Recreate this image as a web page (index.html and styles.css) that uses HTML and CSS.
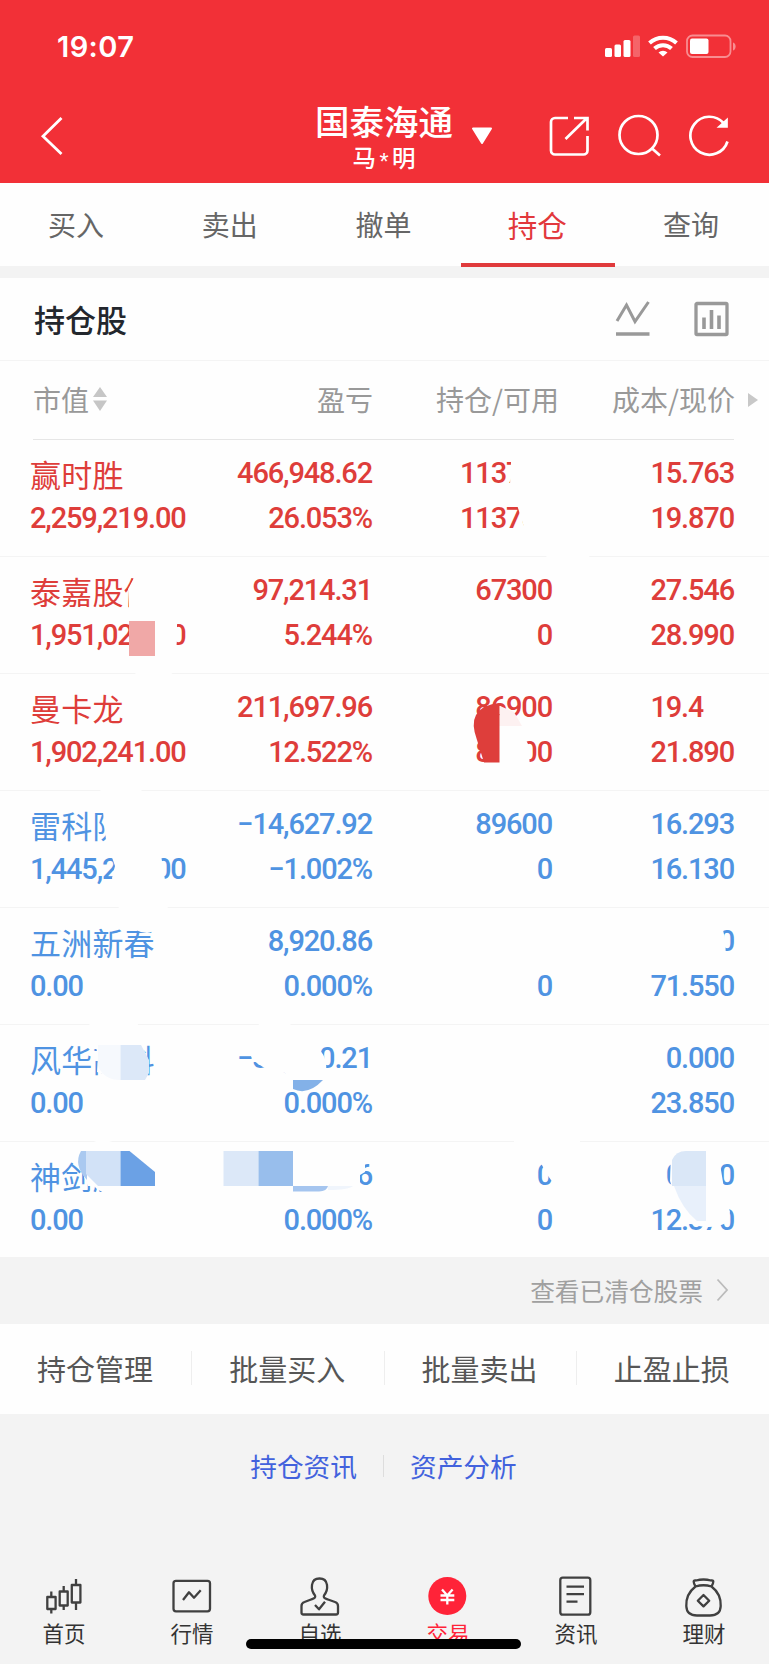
FILE: index.html
```html
<!DOCTYPE html>
<html lang="zh-CN">
<head>
<meta charset="utf-8">
<title>持仓</title>
<link rel="stylesheet" href="styles.css">
</head>
<body>
<div class="app">
  <header class="header">
    <div class="status">
      <span class="time">19:07</span>
      <svg class="status-icons" width="134" height="26" viewBox="0 0 134 26">
        <g fill="#fff">
          <rect x="1" y="14" width="7" height="9" rx="1.5"/><rect x="10.500" y="10.500" width="6.500" height="12.500" rx="1.500"/><rect x="19.500" y="6" width="7" height="17" rx="1.500"/><rect x="29" y="1.500" width="7" height="21.500" rx="1.500" opacity=".25"/>
          <path d="M59 22.500l-4.500-4a6.500 6 0 0 1 9 0z"/>
          <rect x="86" y="4.500" width="18.500" height="15.500" rx="2"/>
          <path d="M129 8.500c3.500 1 3.500 7 0 8z" opacity=".45"/>
        </g>
        <g fill="none" stroke="#fff" stroke-width="4"><path d="M45.500 9a20 20 0 0 1 27 0"/><path d="M50.500 14.500a12.500 12.500 0 0 1 17 0"/></g>
        <rect x="83" y="1.500" width="43.500" height="21.500" rx="5.500" fill="none" stroke="#fff" stroke-width="1.800" opacity=".45"/>
      </svg>
    </div>
    <div class="titlebar">
      <svg class="back" width="24" height="40" viewBox="0 0 24 40"><path d="M21.500 2L3 20.200L21.500 38" fill="none" stroke="#fff" stroke-width="2.800"/></svg>
      <div class="account"><div class="broker">国泰海通</div><div class="owner">马<i>*</i>明</div></div>
      <svg class="caret" width="22" height="18" viewBox="0 0 22 18"><path d="M2 1.500h18L11 16z" fill="#fff" stroke="#fff" stroke-width="2" stroke-linejoin="round"/></svg>
      <svg class="tools" width="184" height="44" viewBox="0 0 184 44">
        <g fill="none" stroke="#fff" stroke-width="2.700">
          <path d="M20 4H7a4 4 0 0 0-4 4v28.500a4 4 0 0 0 4 4h28.500a4 4 0 0 0 4-4V22M17.500 25L38.500 4.500M26 4h13.500v12.500"/>
          <circle cx="90.500" cy="21" r="19"/><path d="M103.500 34l8.500 7.500"/>
          <path d="M179.500 27.500A19 19 0 1 1 175.500 9"/><path d="M172 12.500h6.500V6.500z" fill="#fff"/>
        </g>
      </svg>
    </div>
  </header>

  <nav class="tabs"><span>买入</span><span>卖出</span><span>撤单</span><span class="active">持仓</span><span>查询</span></nav>

  <section class="holdings">
    <div class="section-head">
      <h2>持仓股</h2>
      <svg width="114" height="36" viewBox="0 0 114 36" fill="none" stroke="#999">
        <path d="M2 20L11.500 4L20 20.500L33.500 1" stroke-width="3"/><path d="M1 33h33.500" stroke-width="3.300"/>
        <rect x="81" y="2.500" width="31" height="31" rx="1" stroke-width="3.300"/><path d="M89 16.500v11.500M96.500 9v19M104 14.500v13.500" stroke-width="3.600"/>
      </svg>
    </div>
    <div class="cols">
      <span class="sortable">市值<svg width="14" height="24" viewBox="0 0 14 24" fill="#c6c6c6"><path d="M7 0l7 10H0zM0 13.500h14L7 24z"/></svg></span>
      <span>盈亏</span><span class="qty">持仓/可用</span><span>成本/现价</span>
      <svg class="more" width="10" height="14" viewBox="0 0 10 14"><path d="M0 0l10 7l-10 7z" fill="#c8c8c8"/></svg>
    </div>
    <div class="list">
      <div class="row up"><b>赢时胜</b><span>466,948.62</span><span>113700</span><span>15.763</span><span class="l">2,259,219.00</span><span>26.053%</span><span>113700</span><span>19.870</span></div>
      <div class="row up"><b>泰嘉股份</b><span>97,214.31</span><span>67300</span><span>27.546</span><span class="l">1,951,020.00</span><span>5.244%</span><span>0</span><span>28.990</span></div>
      <div class="row up"><b>曼卡龙</b><span>211,697.96</span><span>86900</span><span>19.400</span><span class="l">1,902,241.00</span><span>12.522%</span><span>86900</span><span>21.890</span></div>
      <div class="row down"><b>雷科防务</b><span>−14,627.92</span><span>89600</span><span>16.293</span><span class="l">1,445,200.00</span><span>−1.002%</span><span>0</span><span>16.130</span></div>
      <div class="row down"><b>五洲新春</b><span>8,920.86</span><span></span><span>0</span><span class="l">0.00</span><span>0.000%</span><span>0</span><span>71.550</span></div>
      <div class="row down"><b>风华高科</b><span>−35,430.21</span><span></span><span>0.000</span><span class="l">0.00</span><span>0.000%</span><span></span><span>23.850</span></div>
      <div class="row down"><b>神剑股份</b><span>6</span><span>0</span><span>0.000</span><span class="l">0.00</span><span>0.000%</span><span>0</span><span>12.370</span></div>
      <svg class="mask" width="769" height="817" viewBox="0 440 769 817">
        <g fill="#fefefe">
          <path d="M511 462L515 455L555 455L566 505L592 545Q594 562 570 566Q548 565 541 548L524 527L518 508L510 484z"/>
          <path d="M134 578Q136 571 152 572Q177 578 177 612V640L174 672Q155 688 133 672L129 656V606L128 589z"/>
          <path d="M98 793Q118 768 141 790L160 810V846L161 855L165 880L168 910L164 925Q145 938 122 922L112 878L115 866L106 840L103 812z"/>
          <path d="M125 919H160Q158 932 147 933Q135 933 125 919z"/>
          <path d="M704 690L756 686V734H703z"/>
          <path d="M652 917Q690 900 723 930Q727 944 725 958Q690 970 652 950z"/>
          <path d="M226 929Q226 912 250 914L268 925Q270 949 262 958Q226 958 226 929z"/>
          <path d="M88 1020Q105 995 136 1015L142 1045L149 1062L147 1080H120L97 1072L98 1055L94 1040z"/>
          <path d="M249 1046L253 1030Q274 1008 291 1025L315 1045Q328 1056 326 1070L318 1082L263 1067L254 1061L251 1056z"/>
          <path d="M79 1153Q100 1130 122 1148H158V1200Q145 1220 125 1205L97 1189L94 1186L88 1186L84 1177z"/>
          <path d="M213 1147H365V1172L360 1175V1187H213z"/>
          <path d="M537 1155H600V1190H562L551 1180L546 1173L541 1163zM514 1135H580V1147H514z"/>
          <path d="M671 1152H718L724 1188L730 1212L726 1223Q710 1231 688 1223L680 1212L670 1181z"/>
        </g>
        <path d="M129 621h26v35h-26z" fill="#f0a8a7"/>
        <path d="M478 724Q487 718 500 715L516 719L522 732L528 744L530 766Q520 780 494 768z" fill="#fefefe"/>
        <path d="M500 706l14 6l8 14h-23z" fill="#fdf1f1"/>
        <path d="M499.500 703V762.500H484L477 740Q471 724 476 715Q483 704 499.500 703z" fill="#de3e3b"/>
        <path d="M98 1045h22.500v35Q104 1080 98 1066z" fill="#f6f9fd"/>
        <path d="M120.500 1045H141L149 1060V1073L145 1080H120.500z" fill="#dce8f8"/>
        <path d="M293 1080h30Q308 1096 293 1089z" fill="#83b1e8"/>
        <path d="M81 1151h6v29Q73 1165 81 1151z" fill="#aac9f0"/>
        <path d="M86 1151h34.500v35H98L86 1174z" fill="#d2e2f7"/>
        <path d="M120.500 1151h9L155 1172v14h-34.500z" fill="#6ba1e5"/>
        <path d="M223.500 1151h35v35h-35z" fill="#dce8f8"/><path d="M258.500 1151h34.500v35h-34.500z" fill="#98beec"/>
        <path d="M293 1186h35q-1 5-9 5.500h-26z" fill="#a5c5ef"/><path d="M328 1186h25q-5 4-25 4z" fill="#f0f5fc"/>
        <path d="M672 1160Q676 1151 686 1151H706V1186H672z" fill="#dae7f7"/><path d="M674 1186h32v35H697Q682 1209 674 1186z" fill="#e8f0fb"/>
      </svg>
    </div>
  </section>

  <div class="cleared">查看已清仓股票<svg width="13" height="24" viewBox="0 0 13 24"><path d="M1.500 1.500L11 12L1.500 22.500" fill="none" stroke="#bbb" stroke-width="1.800"/></svg></div>
  <div class="actions"><span>持仓管理</span><span>批量买入</span><span>批量卖出</span><span>止盈止损</span></div>
  <div class="links"><span>持仓资讯</span><span>资产分析</span></div>

  <nav class="bottom">
    <div><svg viewBox="0 0 48 48"><path d="M11.300 19.500V25M11.300 37v4.500M7.300 25h8.300v12H7.300zM23.700 14v5.500M23.700 33.500V38M19.700 19.500h8v14h-8zM36 7v6M36 30.500V38M31.800 13h8.600v17.500h-8.600z"/></svg>首页</div>
    <div><svg viewBox="0 0 48 48"><rect x="5.500" y="8.800" width="36.500" height="30.500" rx="2.500"/><path d="M15 28l6-7.700l5 5.400l6.700-7.400"/></svg>行情</div>
    <div><svg viewBox="0 0 48 48"><path d="M19 23.500C14.500 18 14 6.500 23.500 6.500S32.500 18 28 23.500C27 26 29 26.500 32 27.500L39 30Q42 31 42 34V40.500Q42 42.500 40 42.500H7.500Q5.500 42.500 5.500 40.500V34Q5.500 31 8.500 30L15 27.500C18 26.500 20 26 19 23.500z"/><path d="M19 33l4 4.300l6-7.600"/></svg>自选</div>
    <div class="active"><svg viewBox="0 0 48 48"><circle cx="23.300" cy="24" r="19"/><path d="M18 17.500l5.300 6l5.300-6M23.300 23.500v9M16.500 23.500h13.800M16.500 28h13.800"/></svg>交易</div>
    <div><svg viewBox="0 0 48 48"><rect x="8.300" y="5.700" width="30" height="37" rx="2.500"/><path d="M14.500 14.700H32M14.500 22.200H32M14.500 29.700h11"/></svg>资讯</div>
    <div><svg viewBox="0 0 48 48"><path d="M15.500 14.500C13 10 13 8 16 8.500Q23.500 6.500 31 8.500C34 8 34 10 31.500 14.500Q23.500 12 15.500 14.500zM15.500 14.500C9 19.500 6 27 6.300 34C6.500 41 11 43.500 17 43.500H30C36 43.500 40.500 41 40.700 34C41 27 38 19.500 31.500 14.500M23.500 23l5.700 5.700l-5.700 5.700l-5.700-5.700z"/></svg>理财</div>
    <i class="home-bar"></i>
  </nav>
</div>
</body>
</html>
```
FILE: styles.css
```css
* { box-sizing: border-box; }
body { margin: 0; background: #f3f3f3; font-family: "Noto Sans CJK SC", sans-serif; }
svg { display: block; flex: none; }
.app { width: 769px; height: 1664px; overflow: hidden; display: flex; flex-direction: column; }

.header { height: 183px; background: #f23037; color: #fff; }
.status { height: 92px; padding: 34px 31px 0 57px; display: flex; justify-content: space-between; }
.time { font: 600 29px/26px Inter, sans-serif; letter-spacing: .4px; }
.titlebar { height: 91px; display: flex; align-items: flex-start; padding-left: 40px; }
.back { margin-top: 24px; }
.account { width: 144px; margin-left: 248px; text-align: center; white-space: nowrap; font-family: "Liberation Sans", "Noto Sans CJK SC", sans-serif; }
.broker { font-size: 34.500px; font-weight: 500; line-height: 40px; margin-top: 11px; }
.owner { font-size: 23.500px; font-weight: 500; line-height: 28px; margin-top: 2px; }
.owner i { font-style: normal; display: inline-block; width: 16px; height: 20px; line-height: 34px; vertical-align: top; }
.caret { margin: 35px 0 0 15px; }
.tools { margin: 22px 0 0 55px; }

.tabs { height: 83px; display: grid; grid-template-columns: repeat(5, 1fr); background: #fefefe; color: #666; font-size: 28px; line-height: 83px; text-align: center; }
.tabs span { padding-right: 2px; }
.tabs .active { color: #e2383c; font-size: 29.500px; line-height: 82px; height: 84px; border-bottom: 4px solid #e03a3c; position: relative; }

.holdings { margin-top: 12px; background: #fefefe; }
.section-head { height: 83px; padding: 0 40px 0 34px; display: flex; align-items: center; justify-content: space-between; border-bottom: 1px solid #f4f4f4; }
h2 { margin: 0; font-size: 31px; line-height: 40px; font-weight: 500; color: #23272d; }
.cols, .row { display: grid; grid-template-columns: 172px 170px 180px 182px; }
.cols { height: 79px; margin: 0 35px 0 33px; padding-bottom: 2px; grid-template-columns: 170px 170px 186px 176px; align-items: center; border-bottom: 1px solid #e6e6e6; color: #999; font-size: 28px; text-align: right; position: relative; line-height: 40px; }
.sortable { display: flex; align-items: center; gap: 4px; }
.more { position: absolute; right: -24px; top: 32px; }
.list { position: relative; }
.row { height: 117px; padding: 12px 0 0 30px; grid-template-rows: 45px 45px; border-bottom: 1px solid #f4f4f4; font: 500 29px/42px Roboto, sans-serif; letter-spacing: -1.150px; text-align: right; white-space: nowrap; }
.row:nth-child(7) { height: 115px; border: 0; }
.row b { font: 400 31px/44px "Noto Sans CJK SC", sans-serif; letter-spacing: .2px; text-align: left; }
.row .l { text-align: left; }
.up { color: #de3d3a; }
.down { color: #4f93e2; }
.mask { position: absolute; left: 0; top: 0; }

.cleared { height: 67px; display: flex; align-items: center; justify-content: flex-end; gap: 13px; padding: 0 40px 2px 0; color: #a0a0a0; font-size: 24.700px; }
.actions { height: 90px; padding-bottom: 2px; background: #fefefe; display: grid; grid-template-columns: repeat(4, 1fr); align-items: center; text-align: center; font-size: 29px; color: #565656; line-height: 34px; }
.actions span { padding-right: 2px; }
.actions span + span { box-shadow: -1px 0 #eee; }
.links { height: 106px; padding-right: 2px; padding-bottom: 2px; display: flex; justify-content: center; align-items: center; color: #4262dd; font-size: 26.700px; line-height: 22px; }
.links span { padding: 0 26px; }
.links span + span { border-left: 1px solid #ddd; }

.bottom { margin-top: 52px; height: 92px; display: grid; grid-template-columns: repeat(6, 128px); font-size: 21.500px; line-height: 30px; color: #333; text-align: center; position: relative; }
.bottom svg { width: 48px; height: 48px; margin: 0 auto -2px; fill: none; stroke: #404040; stroke-width: 2.300; stroke-linejoin: round; }
.bottom .active { color: #ff2338; }
.bottom .active svg { stroke: #fff; }
.active circle { fill: #ff2338; stroke: none; }
.home-bar { position: absolute; left: 246px; top: 67px; width: 275px; height: 10px; border-radius: 5px; background: #000; }
```
